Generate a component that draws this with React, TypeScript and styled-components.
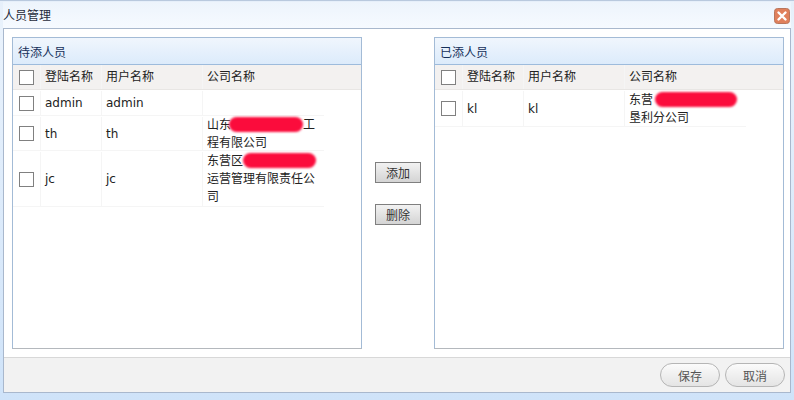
import React from 'react';
import styled, {createGlobalStyle} from 'styled-components';

const GlobalStyle = createGlobalStyle`
  html, body {
    margin: 0;
    padding: 0;
    background: #fff;
  }
  * {
    box-sizing: border-box;
  }
`;

const Dialog = styled.div`
  width: 794px;
  height: 400px;
  display: flex;
  flex-direction: column;
  padding: 1px 3px 7px;
  overflow: hidden;
  background: linear-gradient(#e6effa, #e9f2fc 30px, #cfe3f9);
  border-top: 1px solid #b9c9de;
  font-family: 'DejaVu Sans', 'Noto Sans CJK SC', sans-serif;
  font-size: 12px;
  color: #222;
`;
const TitleBar = styled.div`
  height: 26px;
  flex: none;
  display: flex;
  align-items: center;
  justify-content: space-between;
  background: linear-gradient(#edf4fc, #f6faff);
`;
const Title = styled.div`
  font-size: 12px;
  color: #1f2a3a;
  padding-bottom: 2px;
`;
const CloseButton = styled.div`
  width: 16px;
  height: 16px;
  display: flex;
  margin-right: 1px;
  margin-top: 1px;
`;
const Body = styled.div`
  flex: 1;
  min-height: 0;
  display: flex;
  flex-direction: column;
  background: #fff;
  border: 1px solid #a9b8cd;
`;
const Content = styled.div`
  flex: 1;
  min-height: 0;
  display: flex;
  padding: 8px 7px 8px 8px;
  border-bottom: 1px solid #d8d8d8;
`;
const Panel = styled.section`
  width: 350px;
  flex: none;
  border: 1px solid #a3bbd6;
  border-bottom-color: #b4b8bd;
  background: #fff;
`;
const PanelHeader = styled.div`
  height: 27px;
  padding: 0 5px;
  display: flex;
  align-items: center;
  font-size: 12px;
  color: #15305a;
  background: linear-gradient(#f0f6fd, #dcebfb);
  border-bottom: 1px solid #9dbbdc;
`;
const Row = styled.div<{$height: number}>`
  display: flex;
  align-items: stretch;
  width: 311px;
  height: ${(p) => p.$height}px;
  padding-top: 1px;
  border-bottom: 1px solid #f5f5f5;
`;
const HeadRow = styled.div`
  display: flex;
  align-items: stretch;
  height: 25px;
  background: #f3f1f0;
  border-bottom: 1px solid #e8e6e4;
`;
const Cell = styled.div`
  display: flex;
  align-items: center;
  padding-left: 4px;
  line-height: 18px;
  border-right: 1px solid #f5f5f5;
`;
const CheckCell = styled(Cell)`
  width: 28px;
  padding-left: 6px;
`;
const LoginCell = styled(Cell)`
  width: 61px;
`;
const UserCell = styled(Cell)`
  width: 101px;
`;
const CompanyCell = styled(Cell)`
  width: 121px;
  display: block;
  align-self: center;
  border-right: 0;
`;
const Check = styled.span`
  display: block;
  width: 15px;
  height: 15px;
  background: #fff;
  border: 1px solid #808080;
`;
const Redact = styled.span<{$width: number; $left: number}>`
  display: inline-block;
  vertical-align: -3px;
  width: ${(p) => p.$width}px;
  height: 15px;
  margin-left: ${(p) => p.$left}px;
  border-radius: 8px;
  background: #fb0c3c;
  filter: blur(1px);
`;
const Actions = styled.div`
  width: 72px;
  flex: none;
  display: flex;
  flex-direction: column;
  align-items: center;
  gap: 21px;
  padding-top: 125px;
`;
const ActionButton = styled.div`
  width: 46px;
  height: 21px;
  display: flex;
  align-items: center;
  justify-content: center;
  font-size: 12px;
  color: #333;
  background: linear-gradient(#f2f2f2, #d4d4d4);
  border: 1px solid #7f7f7f;
`;
const Footer = styled.div`
  height: 34px;
  flex: none;
  display: flex;
  align-items: center;
  justify-content: flex-end;
  gap: 5px;
  padding-right: 5px;
  background: #f2f2f2;
`;
const PillButton = styled.div`
  width: 60px;
  height: 24px;
  display: flex;
  align-items: center;
  justify-content: center;
  font-size: 12px;
  color: #555;
  border: 1px solid #b5b5b5;
  border-radius: 12px;
  background: linear-gradient(#fbfbfb, #e4e4e4);
`;

type Person = {login: string; user: string; company: React.ReactNode; height: number};

const pending: Person[] = [
  {login: 'admin', user: 'admin', company: '', height: 26},
  {
    login: 'th',
    user: 'th',
    company: (
      <>
        山东<Redact $width={74} $left={-2} />工<br />程有限公司
      </>
    ),
    height: 35,
  },
  {
    login: 'jc',
    user: 'jc',
    company: (
      <>
        东营区<Redact $width={73} $left={0} />
        <br />运营管理有限责任公<br />司
      </>
    ),
    height: 56,
  },
];

const added: Person[] = [
  {
    login: 'kl',
    user: 'kl',
    company: (
      <>
        东营<Redact $width={82} $left={2} />
        <br />垦利分公司
      </>
    ),
    height: 37,
  },
];

function PersonPanel({title, rows}: {title: string; rows: Person[]}): React.JSX.Element {
  return (
    <Panel>
      <PanelHeader>{title}</PanelHeader>
      <HeadRow>
        <CheckCell>
          <Check />
        </CheckCell>
        <LoginCell>登陆名称</LoginCell>
        <UserCell>用户名称</UserCell>
        <CompanyCell>公司名称</CompanyCell>
      </HeadRow>
      {rows.map((row) => (
        <Row key={row.login} $height={row.height}>
          <CheckCell>
            <Check />
          </CheckCell>
          <LoginCell>{row.login}</LoginCell>
          <UserCell>{row.user}</UserCell>
          <CompanyCell>{row.company}</CompanyCell>
        </Row>
      ))}
    </Panel>
  );
}

export default function App(): React.JSX.Element {
  return (
    <Dialog>
      <GlobalStyle />
      <TitleBar>
        <Title>人员管理</Title>
        <CloseButton>
          <svg width="16" height="16" viewBox="0 0 16 16">
            <rect x="0.5" y="0.5" width="15" height="15" rx="3" fill="#e0805c" stroke="#b9765c" />
            <path d="M4.5 4.5l7 7M11.5 4.5l-7 7" stroke="#fff" strokeWidth="2.4" strokeLinecap="round" />
          </svg>
        </CloseButton>
      </TitleBar>
      <Body>
        <Content>
          <PersonPanel title="待添人员" rows={pending} />
          <Actions>
            <ActionButton>添加</ActionButton>
            <ActionButton>删除</ActionButton>
          </Actions>
          <PersonPanel title="已添人员" rows={added} />
        </Content>
        <Footer>
          <PillButton>保存</PillButton>
          <PillButton>取消</PillButton>
        </Footer>
      </Body>
    </Dialog>
  );
}
